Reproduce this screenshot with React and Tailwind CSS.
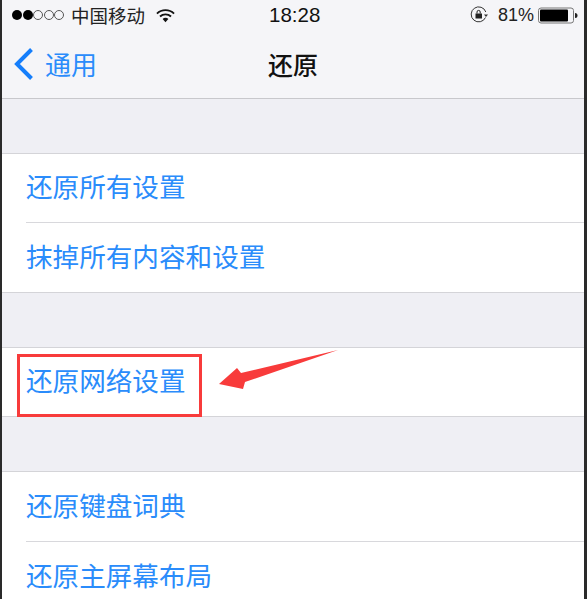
import React from 'react';

const cjk = "font-['Noto_Sans_CJK_SC','Liberation_Sans',sans-serif]";

const Row = ({ label, height }) => (
  <div className={`${height} flex items-center pb-[3px]`}>
    <span className="text-[26.6px] leading-none text-[#2a8cfb]">{label}</span>
  </div>
);

const Group = ({ children, gap }) => (
  <div className={`${gap} bg-white border-y border-[#d4d4d8] pl-[24px]`}>{children}</div>
);

const App = () => (
  <div className={`relative w-[587px] h-[599px] overflow-hidden bg-[#efeff4] ${cjk}`}>
    <div className="flex h-[599px] border-l-2 border-r-[3px] border-[#2a2a2a]">
      <div className="flex-1 min-w-0">
        <div className="h-[99px] bg-[#f5f5f8] border-b border-[#c8c8cc]">
          <div className="h-[30px] relative flex items-center justify-between pl-[10px] pr-[6px]">
            <div className="flex items-center">
              <div className="flex gap-[0.5px]">
                <span className="w-[10px] h-[10px] rounded-full bg-black" />
                <span className="w-[10px] h-[10px] rounded-full bg-black" />
                <span className="w-[10px] h-[10px] rounded-full border border-[#555]" />
                <span className="w-[10px] h-[10px] rounded-full border border-[#555]" />
                <span className="w-[10px] h-[10px] rounded-full border border-[#555]" />
              </div>
              <span className="ml-[7px] text-[18.5px] leading-none text-[#222]">中国移动</span>
              <svg className="ml-[11px]" width="19" height="15" viewBox="0 0 20 15">
                <path d="M1 5.5a13 13 0 0 1 18 0" fill="none" stroke="#111" strokeWidth="2" />
                <path d="M4.2 8.6a8.5 8.5 0 0 1 11.6 0" fill="none" stroke="#111" strokeWidth="2" />
                <path d="M7 11.2a4.2 4.2 0 0 1 6 0L10 14.5z" fill="#111" />
              </svg>
            </div>
            <span className="absolute left-[267px] top-[4px] text-[20.5px] leading-[22px] font-['Liberation_Sans',sans-serif] font-medium text-[#111]">18:28</span>
            <div className="flex items-center">
              <svg width="20" height="20" viewBox="0 0 20 20">
                <path d="M16.5 12.5A7.5 7.5 0 1 1 16.8 7" fill="none" stroke="#333" strokeWidth="1" />
                <path d="M15 9.5h4l-2 2.5z" fill="#333" />
                <rect x="6.5" y="8.5" width="6.5" height="5" fill="#222" />
                <path d="M8 8.5V7a1.6 1.6 0 0 1 3.2 0v1.5" fill="none" stroke="#222" strokeWidth="1" />
              </svg>
              <span className="ml-[9px] text-[18px] leading-none font-['Liberation_Sans',sans-serif] text-[#222]">81%</span>
              <svg className="ml-[4px]" width="40" height="17" viewBox="0 0 40 17">
                <rect x="0.5" y="1" width="35" height="15" rx="2.5" fill="none" stroke="#777" />
                <rect x="2" y="2.5" width="28" height="12" rx="1" fill="#000" />
                <path d="M37 6a2.5 2.5 0 0 1 0 5z" fill="#222" />
              </svg>
            </div>
          </div>
          <div className="relative h-[68px] flex items-center justify-center">
            <div className="absolute left-[11px] top-[17px] flex items-center">
              <svg width="22" height="34" viewBox="0 0 22 34">
                <path d="M18.5 2.5 4 17l14.5 14.5" fill="none" stroke="#157efb" strokeWidth="4" />
              </svg>
              <span className="ml-[10px] text-[26px] leading-none text-[#2a8cfb]">通用</span>
            </div>
            <span className="text-[25px] leading-none font-medium text-[#111]">还原</span>
          </div>
        </div>
        <Group gap="mt-[54px]">
          <Row label="还原所有设置" height="h-[68px]" />
          <div className="h-px bg-[#d8d8dc]" />
          <Row label="抹掉所有内容和设置" height="h-[69px]" />
        </Group>
        <Group gap="mt-[54px]">
          <Row label="还原网络设置" height="h-[68px]" />
        </Group>
        <Group gap="mt-[54px]">
          <Row label="还原键盘词典" height="h-[69px]" />
          <div className="h-px bg-[#d8d8dc]" />
          <Row label="还原主屏幕布局" height="h-[69px]" />
        </Group>
      </div>
    </div>
    <div className="absolute left-[17px] top-[354px] w-[185px] h-[63px] border-[3px] border-[#f83b3b]" />
    <svg className="absolute left-[215px] top-[345px]" width="130" height="50" viewBox="0 0 130 50">
      <path d="M4 39 22 23l4 5L123 5 30 37l-2 7z" fill="#f83b3b" />
    </svg>
  </div>
);

export default App;
